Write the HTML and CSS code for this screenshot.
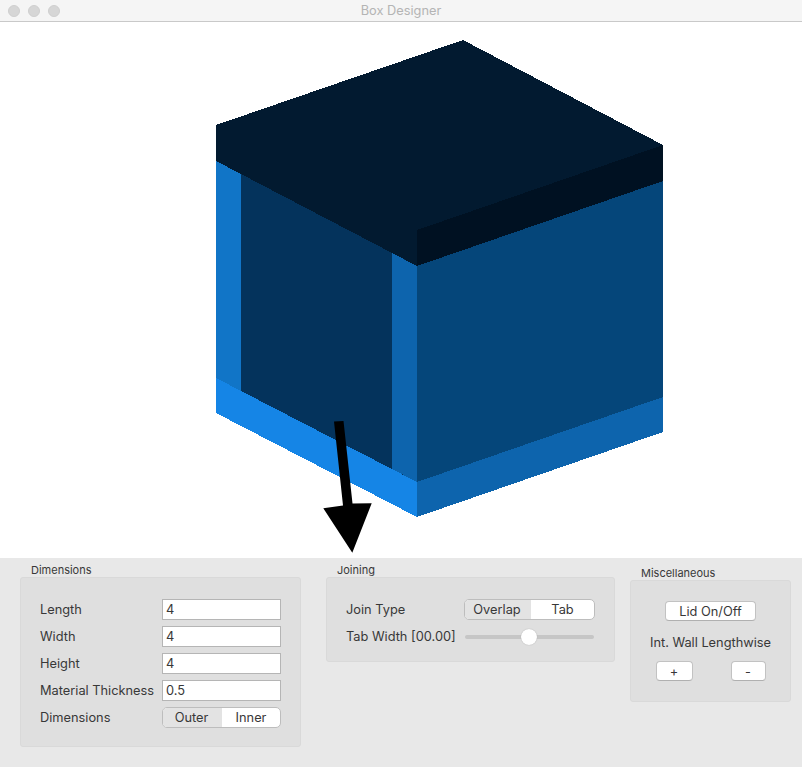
FILE: index.html
```html
<!DOCTYPE html>
<html lang="en">
<head>
<meta charset="utf-8">
<title>Box Designer</title>
<link rel="stylesheet" href="styles.css">
</head>
<body>
<div class="window">
  <header class="titlebar">
    <div class="lights"><span class="light"></span><span class="light"></span><span class="light"></span></div>
    <div class="title">Box Designer</div>
  </header>
  <main class="viewport">
    <svg class="scene" width="802" height="536" viewBox="0 22 802 536" xmlns="http://www.w3.org/2000/svg">
      <g class="faces">
        <polygon fill="#04335c" points="216,161 417,266 417,482 216,378"/>
        <polygon fill="#1175c7" points="216,161 241,174 241,391 216,378"/>
        <polygon fill="#0d64ad" points="392,253 417,266 417,482 392,469"/>
        <polygon fill="#05467a" points="417,266 663,181 663,397 417,482"/>
        <polygon fill="#1585e6" points="216,378 417,482 417,517 216,413"/>
        <polygon fill="#0d64ad" points="417,482 663,397 663,432 417,517"/>
        <polygon fill="#021a30" points="216,125 463,40 663,145 663,181 417,266 216,161"/>
        <polygon fill="#001122" points="417,230 663,145 663,181 417,266"/>
      </g>
      <polygon fill="#000" points="334,421.5 343.5,421 352.5,503.5 371.7,503.3 352.3,552.7 323.3,508.3 343,505.5"/>
    </svg>
  </main>
  <section class="controls">
    <div class="group group-dim">
      <div class="group-label">Dimensions</div>
      <div class="group-box box-dim">
        <div class="row"><span class="label">Length</span><span class="field">4</span></div>
        <div class="row"><span class="label">Width</span><span class="field">4</span></div>
        <div class="row"><span class="label">Height</span><span class="field">4</span></div>
        <div class="row"><span class="label">Material Thickness</span><span class="field">0.5</span></div>
        <div class="row"><span class="label">Dimensions</span>
          <div class="segment seg-dim"><span class="seg seg-on">Outer</span><span class="seg">Inner</span></div>
        </div>
      </div>
    </div>
    <div class="group group-join">
      <div class="group-label">Joining</div>
      <div class="group-box box-join">
        <div class="row"><span class="label">Join Type</span>
          <div class="segment seg-join"><span class="seg seg-on">Overlap</span><span class="seg">Tab</span></div>
        </div>
        <div class="row row-slider"><span class="label">Tab Width [00.00]</span>
          <div class="slider"><span class="thumb"></span></div>
        </div>
      </div>
    </div>
    <div class="group group-misc">
      <div class="group-label">Miscellaneous</div>
      <div class="group-box box-misc">
        <button class="btn btn-lid">Lid On/Off</button>
        <div class="misc-text">Int. Wall Lengthwise</div>
        <div class="misc-buttons">
          <button class="btn btn-plus">+</button>
          <button class="btn btn-minus">-</button>
        </div>
      </div>
    </div>
  </section>
</div>
</body>
</html>
```

FILE: styles.css
```css
* { box-sizing: border-box; }
html, body { margin: 0; padding: 0; }
body {
  width: 802px;
  height: 767px;
  overflow: hidden;
  font-family: "Inter", "Liberation Sans", sans-serif;
  font-size: 12.8px;
  color: #383838;
}
.window { display: flex; flex-direction: column; height: 767px; }
.titlebar {
  height: 22px;
  flex: none;
  position: relative;
  display: flex;
  align-items: center;
  justify-content: center;
  background: #f5f5f5;
  border-bottom: 1px solid #c9c9c9;
}
.lights { position: absolute; left: 8px; top: 5px; display: flex; gap: 8px; }
.light {
  width: 12px;
  height: 12px;
  border-radius: 50%;
  background: #d6d6d6;
  border: 1px solid #cfcfcf;
}
.title { font-size: 12.8px; color: #b4b4b4; }
.viewport { height: 536px; flex: none; background: #fff; }
.scene { display: block; }
.faces { shape-rendering: crispEdges; }
.controls {
  flex: 1;
  display: flex;
  align-items: flex-start;
  background: #e8e8e8;
  padding: 6px 0 0 20px;
}
.group-dim { width: 281px; }
.group-join { width: 289px; margin-left: 25px; }
.group-misc { width: 161px; margin-left: 15px; margin-top: 3px; }
.group-label {
  height: 13px;
  line-height: 13px;
  font-size: 11px;
  padding-left: 11px;
  color: #383838;
}
.group-box {
  background: #dfdfdf;
  border: 1px solid #d9d9d9;
  border-radius: 3px;
}
.box-dim { height: 170px; padding: 21px 19px 0; }
.box-join { height: 85px; padding: 21px 19px 0; }
.box-misc { height: 122px; display: flex; flex-direction: column; align-items: center; padding-top: 20px; }
.row {
  display: flex;
  align-items: center;
  justify-content: space-between;
  height: 21px;
  margin-bottom: 6px;
}
.label { white-space: nowrap; }
.field {
  width: 119px;
  height: 21px;
  line-height: 19px;
  padding-left: 3px;
  background: #fff;
  border: 1px solid #b5b5b5;
}
.segment {
  display: flex;
  height: 21px;
  border: 1px solid #bdbdbd;
  border-radius: 5px;
  background: #fff;
  overflow: hidden;
}
.seg-dim { width: 119px; }
.seg-join { width: 131px; }
.seg { display: flex; align-items: center; justify-content: center; flex: 1; }
.seg-on { background: #e3e3e3; padding-right: 2px; }
.seg-dim .seg-on { flex: 0 0 59px; }
.seg-join .seg-on { flex: 0 0 66px; }
.row-slider { margin-bottom: 0; height: 24px; margin-top: -3px; padding-top: 3px; }
.slider {
  width: 129px;
  height: 4px;
  margin-right: 1px;
  border-radius: 2px;
  background: #c6c6c6;
  position: relative;
}
.thumb {
  position: absolute;
  left: 56px;
  top: -6px;
  width: 16px;
  height: 16px;
  border-radius: 50%;
  background: #fff;
  box-shadow: 0 0 1px #999;
}
.btn {
  display: block;
  font: inherit;
  color: #383838;
  padding: 0;
  height: 20px;
  background: #fff;
  border: 1px solid #c2c2c2;
  border-bottom-color: #b0b0b0;
  border-radius: 4px;
}
.btn-lid { width: 91px; }
.misc-text { margin-top: 14px; height: 15px; line-height: 15px; }
.misc-buttons { display: flex; justify-content: space-between; width: 110px; margin-top: 11px; }
.btn-plus { width: 37px; }
.btn-minus { width: 35px; }
```
